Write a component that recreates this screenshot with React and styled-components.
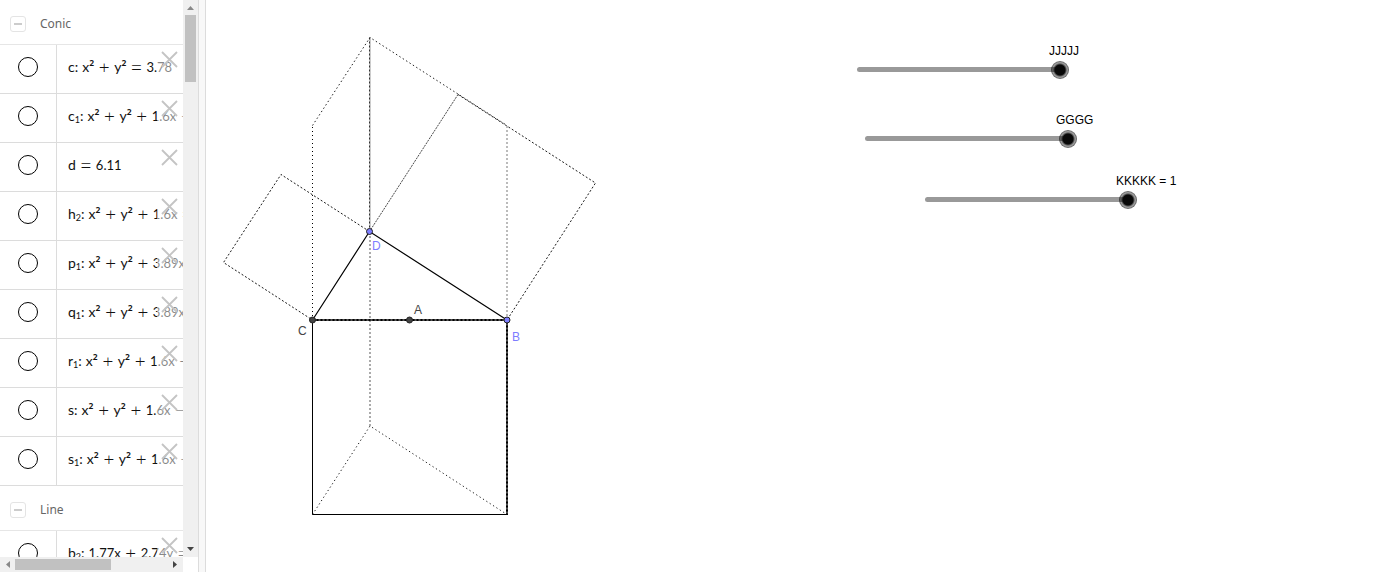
import React, { useState } from 'react';
import styled, { createGlobalStyle } from 'styled-components';

const GlobalStyle = createGlobalStyle`
  * {
    box-sizing: border-box;
  }

  body {
    margin: 0;
    background: #fff;
    font-family: 'Liberation Sans', Arial, sans-serif;
    overflow: hidden;
  }
`;

const Page = styled.div`
  display: flex;
  height: 100vh;
  padding-bottom: 2px;
`;

const AlgebraView = styled.aside`
  display: grid;
  grid-template-columns: 183px 15px;
  grid-template-rows: minmax(0, 1fr) 15px;
  flex: none;
`;

const ObjectList = styled.div`
  overflow: hidden;
`;

const GroupHeader = styled.div`
  display: flex;
  align-items: center;
  gap: 14px;
  height: 45px;
  padding: 4px 10px 0;
  border-bottom: 1px solid #e6e6e6;
`;

const GroupTitle = styled.h2`
  margin: 0;
  padding-bottom: 2px;
  font: 400 12px 'Noto Sans', sans-serif;
  color: #666;
`;

const CollapseButton = styled.button`
  display: flex;
  align-items: center;
  justify-content: center;
  width: 16px;
  height: 16px;
  padding: 0;
  border: 1px solid #e4e4e4;
  border-radius: 3px;
  background: #fff;

  &::before {
    content: '';
    width: 8px;
    height: 2px;
    background: #ccc;
  }
`;

const Row = styled.div`
  position: relative;
  display: flex;
  height: 49px;
  border-bottom: 1px solid #dcdcdc;
`;

const MarbleCell = styled.div`
  display: flex;
  align-items: center;
  justify-content: center;
  flex: none;
  width: 57px;
  padding-bottom: 4px;
  border-right: 1px solid #dcdcdc;
`;

const Marble = styled.input`
  appearance: none;
  width: 20px;
  height: 20px;
  margin: 0;
  border: 1px solid #000;
  border-radius: 50%;
  background: #fff;
`;

const Formula = styled.label`
  display: flex;
  align-items: center;
  padding: 0 0 4px 11px;
  font: 400 14px/20px Lato, sans-serif;
  color: #111;
  white-space: pre;
`;

const Sub = styled.span`
  padding-top: 8px;
  font-size: 9px;
`;

const Colon = styled.span`
  padding-right: 4px;
`;

const Squared = styled.span`
  font: 500 14px/20px 'Noto Sans', sans-serif;
`;

const Numeral = styled.span`
  font-size: 13px;
`;

const Operator = styled.span`
  width: 20px;
  text-align: center;
  font: 300 19px/20px 'Open Sans', sans-serif;
`;

const Fade = styled.div`
  position: absolute;
  top: 0;
  right: 0;
  width: 26px;
  height: 48px;
  background: rgba(255, 255, 255, 0.5);
`;

const DeleteButton = styled.button`
  display: flex;
  margin: 6px 0 0 4px;
  padding: 0;
  border: 0;
  background: none;
`;

const VerticalBar = styled.div`
  display: flex;
  flex-direction: column;
  align-items: center;
  justify-content: space-between;
  background: #f0f0f0;
`;

const HorizontalBar = styled.div`
  display: flex;
  justify-content: space-between;
  align-items: center;
  background: #f0f0f0;
`;

const Thumb = styled.div`
  width: ${(p) => p.$width}px;
  height: ${(p) => p.$height}px;
  margin-${(p) => p.$end}: auto;
  background: #c1c1c1;
`;

const Divider = styled.div`
  flex: none;
  width: 8px;
  border: 1px solid #dcdcdc;
  border-width: 0 1px;
  background: #f8f8f8;
`;

const GraphicsView = styled.main`
  position: relative;
  flex: 1;
  min-width: 0;
  overflow: hidden;
`;

const Drawing = styled.svg`
  display: block;
  width: 100%;
  height: 100%;

  text {
    font-size: 12px;
  }
`;

const Slider = styled.div`
  position: absolute;
  left: ${(p) => p.$x}px;
  top: ${(p) => p.$y}px;
  display: flex;
  flex-direction: column;
  gap: 3px;
`;

const SliderLabel = styled.label`
  padding-left: ${(p) => p.$shift}px;
  font-size: 12px;
  line-height: 14px;
  color: #000;
`;

const SliderInput = styled.input`
  appearance: none;
  width: 212px;
  height: 17px;
  margin: 0;
  background: none;

  &::-webkit-slider-runnable-track {
    height: 5px;
    border-radius: 3px;
    background: linear-gradient(to right, #999 calc(100% - 9px), transparent 0);
  }

  &::-webkit-slider-thumb {
    appearance: none;
    width: 18px;
    height: 18px;
    margin-top: -6px;
    border: 1px solid rgba(0, 0, 0, 0.3);
    border-radius: 50%;
    background: radial-gradient(circle, #080808 5px, rgba(0, 0, 0, 0.4) 7px) border-box;
  }
`;

const conics = [
  { name: 'c', tokens: ['x²', '+', 'y²', '=', '3.78'] },
  { name: 'c', sub: '1', tokens: ['x²', '+', 'y²', '+', '1.6x', '−'] },
  { name: 'd', plain: true, tokens: ['=', '6.11'] },
  { name: 'h', sub: '2', tokens: ['x²', '+', 'y²', '+', '1.6x', '='] },
  { name: 'p', sub: '1', tokens: ['x²', '+', 'y²', '+', '3.89x'] },
  { name: 'q', sub: '1', tokens: ['x²', '+', 'y²', '+', '3.89x'] },
  { name: 'r', sub: '1', tokens: ['x²', '+', 'y²', '+', '1.6x', '+'] },
  { name: 's', tokens: ['x²', '+', 'y²', '+', '1.6x', '−'] },
  { name: 's', sub: '1', tokens: ['x²', '+', 'y²', '+', '1.6x', '−'] },
];

const lines = [{ name: 'b', sub: '2', tokens: ['1.77x', '+', '2.74y', '='] }];

const sliders = [
  { id: 'j', label: 'JJJJJ', x: 651, y: 44, shift: 192 },
  { id: 'g', label: 'GGGG', x: 659, y: 113, shift: 191 },
  { id: 'k', label: 'KKKKK = 1', x: 719, y: 174, shift: 191 },
];

const Token = ({ text }) => {
  if ('+=−'.includes(text)) {
    return <Operator>{text}</Operator>;
  }
  if (text.endsWith('²')) {
    return (
      <>
        {text[0]}
        <Squared>²</Squared>
      </>
    );
  }
  return <Numeral>{text}</Numeral>;
};

const ObjectRow = ({ item }) => {
  const id = `show-${item.name}${item.sub || ''}`;
  return (
    <Row>
      <MarbleCell>
        <Marble type="checkbox" id={id} />
      </MarbleCell>
      <Formula htmlFor={id}>
        {item.name}
        {item.sub && <Sub>{item.sub}</Sub>}
        {!item.plain && <Colon>:</Colon>}
        {item.tokens.map((token, i) => (
          <Token key={i} text={token} />
        ))}
      </Formula>
      <Fade>
        <DeleteButton aria-label="Delete">
          <svg width="17" height="17" viewBox="0 0 17 17">
            <path d="M1 1L16 16M16 1L1 16" stroke="#c4c4c4" strokeWidth="1.8" />
          </svg>
        </DeleteButton>
      </Fade>
    </Row>
  );
};

const Group = ({ title, items }) => (
  <section>
    <GroupHeader>
      <CollapseButton aria-label={`Collapse ${title}`} />
      <GroupTitle>{title}</GroupTitle>
    </GroupHeader>
    {items.map((item, i) => (
      <ObjectRow key={i} item={item} />
    ))}
  </section>
);

const Arrow = ({ turn, color }) => (
  <svg width="15" height="15" viewBox="0 0 15 15">
    <path d="M4 10L7.5 6L11 10Z" fill={color} transform={`rotate(${turn} 7.5 7.5)`} />
  </svg>
);

const ParamSlider = ({ slider }) => {
  const [value, setValue] = useState(1);
  return (
    <Slider $x={slider.x} $y={slider.y}>
      <SliderLabel htmlFor={slider.id} $shift={slider.shift}>
        {slider.label}
      </SliderLabel>
      <SliderInput
        id={slider.id}
        type="range"
        min="0"
        max="1"
        step="0.01"
        value={value}
        onChange={(e) => setValue(Number(e.target.value))}
      />
    </Slider>
  );
};

const Construction = () => (
  <Drawing>
    <g transform="translate(-206 0)" fill="none" stroke="#000">
      {/* squares on the two legs */}
      <g strokeDasharray="2 2" strokeWidth="0.9">
        <path d="M369.5 231.5L281 174.5L223.5 262.5L312.5 320" />
        <path d="M458 94.5L595.5 183L507 320" />
        <path d="M458 94.5L369.5 231.5" strokeDasharray="2 1" stroke="#333" />
        <path d="M370 37.5V231.5" stroke="#ccc" strokeWidth="2" strokeDasharray="none" />
        <path d="M369.5 37.5V231.5" stroke="#333" strokeWidth="1" />
      </g>
      {/* sheared copies */}
      <g strokeDasharray="1 3">
        <path d="M312.5 320V125.5" />
        <path d="M312.5 125.5L370 37.5L507 125.5" strokeDasharray="1.5 2.5" stroke="#222" />
        <path d="M370 232V426" stroke="#aaa" strokeWidth="2" strokeDasharray="2 2" />
        <path d="M507 126V320" stroke="#bbb" strokeWidth="2" strokeDasharray="2 2" />
        <path d="M312.5 514.5L370 426L507 514.5" strokeDasharray="1.3 2.7" stroke="#222" />
      </g>
      {/* triangle and the square on the hypotenuse */}
      <path d="M312.5 320L369.5 231.5L507 320" strokeWidth="1.2" />
      <path d="M312.5 320V514.5H507" />
      <path d="M312.5 320H507V515" stroke="#555" strokeWidth="2" />
      <path d="M312.5 320H507V515" strokeWidth="2" strokeDasharray="2 2" />
      <g stroke="#222">
        <circle cx="312.5" cy="320" r="3" fill="#444" />
        <circle cx="409.5" cy="320" r="3" fill="#444" />
        <circle cx="507" cy="320" r="3" fill="#7d7dff" />
        <circle cx="369.5" cy="231.5" r="3" fill="#7d7dff" />
      </g>
      <g stroke="none" fill="#444">
        <text x="298" y="335">C</text>
        <text x="414" y="314">A</text>
        <text x="512" y="341" fill="#7d7dff">B</text>
        <text x="372" y="250" fill="#7d7dff">D</text>
      </g>
    </g>
  </Drawing>
);

const App = () => {
  return (
    <>
      <GlobalStyle />
      <Page>
        <AlgebraView>
          <ObjectList>
            <Group title="Conic" items={conics} />
            <Group title="Line" items={lines} />
          </ObjectList>
          <VerticalBar>
            <Arrow turn={0} color="#888" />
            <Thumb $width={11} $height={67} $end="bottom" />
            <Arrow turn={180} color="#444" />
          </VerticalBar>
          <HorizontalBar>
            <Arrow turn={270} color="#888" />
            <Thumb $width={96} $height={11} $end="right" />
            <Arrow turn={90} color="#444" />
          </HorizontalBar>
        </AlgebraView>
        <Divider />
        <GraphicsView>
          <Construction />
          {sliders.map((s) => (
            <ParamSlider key={s.id} slider={s} />
          ))}
        </GraphicsView>
      </Page>
    </>
  );
};

export default App;
